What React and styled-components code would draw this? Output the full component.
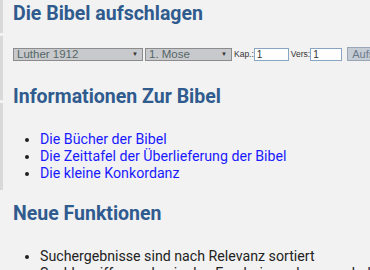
import React from "react";
import styled, { createGlobalStyle } from "styled-components";

const GlobalStyle = createGlobalStyle`
  body {
    margin: 0;
    background: #f2f2f2;
    font-family: Roboto, "Liberation Sans", sans-serif;
    overflow: hidden;
  }
`;

const Page = styled.div`
  display: flex;
  width: 370px;
  height: 270px;
  overflow: hidden;
`;

const Edge = styled.div`
  display: flex;
  flex-direction: column;
  gap: 3px;
  width: 3px;
  flex-shrink: 0;
`;

const EdgeBlock = styled.div`
  height: ${(p) => p.h}px;
  background: #d9d9d9;
`;

const Main = styled.div`
  padding-left: 10px;
  flex: 1;
  min-width: 0;
`;

const Heading = styled.h2`
  margin: ${(p) => p.top}px 0 0;
  font-size: 19.5px;
  line-height: 24px;
  font-weight: 700;
  color: #2f5b8e;
  white-space: nowrap;
`;

const FormRow = styled.div`
  display: flex;
  align-items: center;
  margin-top: 21px;
  white-space: nowrap;
  font-family: "Liberation Sans", Arial, sans-serif;
  font-size: 8.5px;
  color: #333;
`;

const Select = styled.div`
  display: flex;
  align-items: center;
  justify-content: space-between;
  box-sizing: border-box;
  width: ${(p) => p.w}px;
  height: 13px;
  margin-right: 2px;
  padding: 0 4px 0 3px;
  background: #c7c9cc;
  border: 1px solid #8c8c8c;
  color: #566;
  font-size: 11.5px;
  flex-shrink: 0;
`;

const Arrow = styled.span`
  font-size: 6px;
  color: #333;
`;

const Label = styled.span``;

const Input = styled.div`
  box-sizing: border-box;
  width: ${(p) => p.w}px;
  height: 13px;
  margin-right: ${(p) => p.gap}px;
  padding-left: 2px;
  background: #fff;
  border: 1px solid #8aa4c4;
  font-size: 10px;
  line-height: 11px;
  color: #333;
  flex-shrink: 0;
`;

const Button = styled.div`
  box-sizing: border-box;
  height: 14px;
  padding: 0 4px;
  background: #c6ccd4;
  border: 1px solid #9aa6b6;
  color: #6a7a90;
  font-size: 11px;
  line-height: 12px;
  flex-shrink: 0;
`;

const List = styled.ul`
  margin: ${(p) => p.top}px 0 0;
  padding-left: 27px;
  font-size: 14.2px;
  line-height: 17px;
  color: #222;
  white-space: nowrap;
`;

const Item = styled.li``;

const Link = styled.a`
  color: #1a1aff;
  text-decoration: none;
`;

export default function App() {
  return (
    <>
      <GlobalStyle />
      <Page>
        <Edge>
          <EdgeBlock h={33} />
          <EdgeBlock h={64} />
          <EdgeBlock h={87} />
        </Edge>
        <Main>
          <Heading top={2}>Die Bibel aufschlagen</Heading>
          <FormRow>
            <Select w={130}>
              <span>Luther 1912</span>
              <Arrow>▼</Arrow>
            </Select>
            <Select w={87}>
              <span>1. Mose</span>
              <Arrow>▼</Arrow>
            </Select>
            <Label>Kap.:</Label>
            <Input w={35} gap={2}>1</Input>
            <Label>Vers:</Label>
            <Input w={32} gap={5}>1</Input>
            <Button>Aufschlagen</Button>
          </FormRow>
          <Heading top={24}>Informationen Zur Bibel</Heading>
          <List top={22}>
            <Item><Link href="#">Die Bücher der Bibel</Link></Item>
            <Item><Link href="#">Die Zeittafel der Überlieferung der Bibel</Link></Item>
            <Item><Link href="#">Die kleine Konkordanz</Link></Item>
          </List>
          <Heading top={20}>Neue Funktionen</Heading>
          <List top={22}>
            <Item>Suchergebnisse sind nach Relevanz sortiert</Item>
            <Item>Suchbegriffe werden in den Ergebnissen hervorgehoben</Item>
          </List>
        </Main>
      </Page>
    </>
  );
}
